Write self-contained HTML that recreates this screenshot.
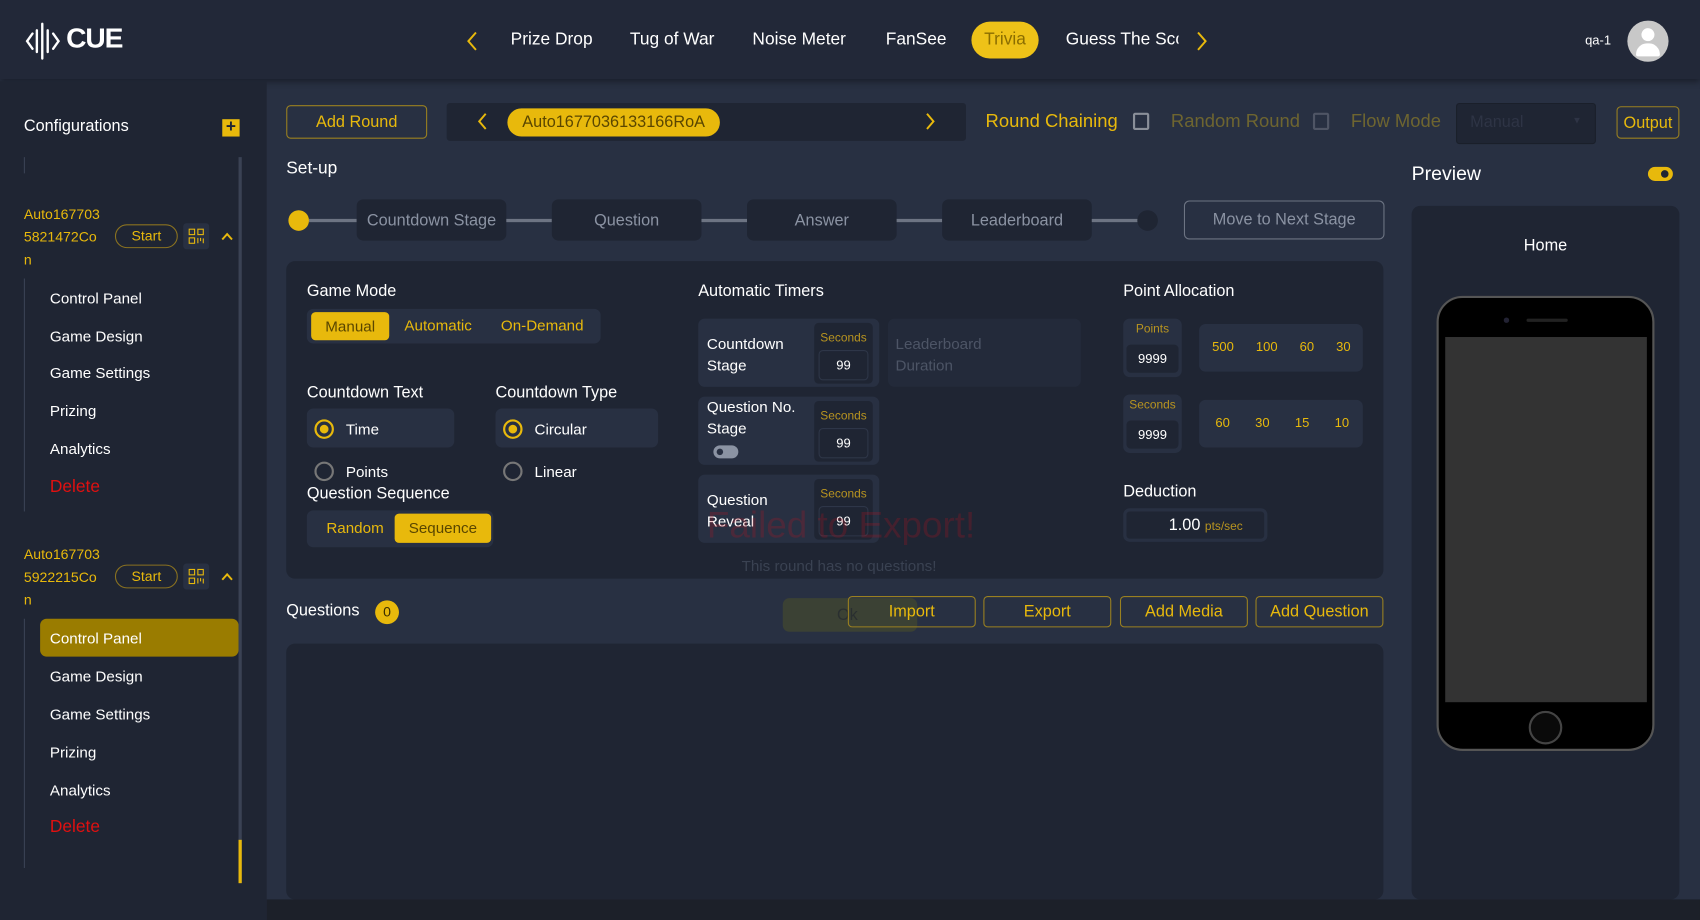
<!DOCTYPE html>
<html><head><meta charset="utf-8">
<style>
*{box-sizing:border-box;margin:0;padding:0}
html,body{width:1700px;height:920px;overflow:hidden;background:#283042}
body{font-family:"Liberation Sans",sans-serif;color:#fff}
#w{position:absolute;left:0;top:0;width:1568px;height:849px;transform:scale(1.08418,1.08363);transform-origin:0 0;background:#283042}
.a{position:absolute}
.y{color:#e8b90c}
.btn{position:absolute;border:1px solid #9a8020;border-radius:4px;color:#e8b90c;font-size:15px;display:flex;align-items:center;justify-content:center;background:#283042}
.card{position:absolute;background:#1f2533;border-radius:8px}
.side a{position:absolute;left:46px;font-size:14px;color:#fff;text-decoration:none}
.stage{position:absolute;top:184px;height:38px;width:138px;background:#1f2533;border-radius:6px;color:#8b93a3;font-size:15px;display:flex;align-items:center;justify-content:center}
.line{position:absolute;top:202px;height:3px;background:#6d7483}
.tbox{position:absolute;background:#283042;border-radius:6px}
.sec{position:absolute;background:#1f2533;border-radius:4px;width:54px;height:56px;text-align:center}
.sec .l{color:#b89420;font-size:11px;margin-top:8px}
.sec .v{margin:5px auto 0;width:46px;height:28px;background:#1f2533;border:1px solid #2e3648;border-radius:4px;font-size:12px;line-height:26px}
.radio{position:absolute;width:18px;height:18px;border-radius:50%;border:2px solid #777}
.radio.on{border-color:#e8b90c}
.radio.on:after{content:"";position:absolute;left:3px;top:3px;width:8px;height:8px;border-radius:50%;background:#e8b90c}
.lbl{position:absolute;font-size:16px;color:#fff}
</style></head><body><div id="w">
<div class="a" style="left:0;top:0;width:1568px;height:73px;background:#222838;box-shadow:0 2px 6px rgba(0,0,0,.4)"></div>
<svg class="a" style="left:22px;top:20px" width="36" height="36" viewBox="0 0 36 36" fill="none" stroke="#fff" stroke-width="2.2" stroke-linecap="round"><path d="M8 11 L3 18 L8 25"/><path d="M12 8 V28"/><path d="M17 2 V34"/><path d="M22 8 V28"/><path d="M27 11 L32 18 L27 25"/></svg>
<div class="a" style="left:61px;top:20px;font-size:26px;font-weight:bold;letter-spacing:-1px">CUE</div>
<svg class="a" style="left:429px;top:29px" width="12" height="18" fill="none" stroke="#e8b90c" stroke-width="1.8"><path d="M10 1 L3 9 L10 17"/></svg>
<div class="a" style="left:471px;top:28px;font-size:16px">Prize Drop</div>
<div class="a" style="left:581px;top:28px;font-size:16px">Tug of War</div>
<div class="a" style="left:694px;top:28px;font-size:16px">Noise Meter</div>
<div class="a" style="left:817px;top:28px;font-size:16px">FanSee</div>
<div class="a" style="left:896px;top:20px;width:62px;height:34px;border-radius:17px;background:#eec218;color:#8a6d00;font-size:16px;text-align:center;line-height:34px">Trivia</div>
<div class="a" style="left:983px;top:28px;font-size:16px;width:104px;overflow:hidden;white-space:nowrap">Guess The Sco</div>
<svg class="a" style="left:1103px;top:29px" width="12" height="18" fill="none" stroke="#e8b90c" stroke-width="1.8"><path d="M2 1 L9 9 L2 17"/></svg>
<div class="a" style="left:1462px;top:30px;font-size:12px">qa-1</div>
<div class="a" style="left:1501px;top:19px;width:38px;height:38px;border-radius:50%;background:#c8c8c8;overflow:hidden"><div class="a" style="left:13px;top:7px;width:12px;height:12px;border-radius:50%;background:#fff"></div><div class="a" style="left:8px;top:21px;width:22px;height:12px;border-radius:11px 11px 2px 2px;background:#fff"></div></div>
<div class="a side" style="left:0;top:75px;width:246px;height:774px;background:#1f2533">
<div class="a" style="left:22px;top:33px;font-size:15px">Configurations</div>
<div class="a" style="left:205px;top:35px;width:16px;height:16px;background:#e8b90c;color:#1f2533;font-weight:bold;font-size:16px;line-height:15px;text-align:center">+</div>
<div class="a" style="left:22px;top:70px;width:1px;height:15px;background:#3a4254"></div>
<div class="a" style="left:220px;top:70px;width:3px;height:670px;background:#3a4254"></div>
<div class="a" style="left:220px;top:700px;width:3px;height:40px;background:#e8b90c"></div>
<div class="a y" style="left:22px;top:112px;font-size:13px;line-height:21px">Auto167703<br>5821472Co<br>n</div>
<div class="a" style="left:106px;top:132px;width:58px;height:22px;border:1px solid #8a7220;border-radius:11px;color:#e8b90c;font-size:13px;text-align:center;line-height:20px">Start</div>
<div class="a" style="left:169px;top:131px;width:24px;height:24px;background:#283042;border-radius:3px"><svg width="24" height="24" fill="none" stroke="#e8b90c" stroke-width="1"><rect x="5.5" y="5.5" width="5" height="5"/><rect x="13.5" y="5.5" width="5" height="5"/><rect x="5.5" y="13.5" width="5" height="5"/><path d="M13.5 13.5v5M16 13.5v3M18.5 14v4.5"/></svg></div>
<svg class="a" style="left:204px;top:139px" width="11" height="8" fill="none" stroke="#e8b90c" stroke-width="1.8"><path d="M1 7 L5.5 2 L10 7"/></svg>
<div class="a" style="left:22px;top:182px;width:1px;height:215px;background:#3a4254"></div>
<a style="top:192px">Control Panel</a>
<a style="top:227px">Game Design</a>
<a style="top:261px">Game Settings</a>
<a style="top:296px">Prizing</a>
<a style="top:331px">Analytics</a>
<a style="top:366px;color:#e01010;font-size:16px">Delete</a>
<div class="a y" style="left:22px;top:426px;font-size:13px;line-height:21px">Auto167703<br>5922215Co<br>n</div>
<div class="a" style="left:106px;top:446px;width:58px;height:22px;border:1px solid #8a7220;border-radius:11px;color:#e8b90c;font-size:13px;text-align:center;line-height:20px">Start</div>
<div class="a" style="left:169px;top:445px;width:24px;height:24px;background:#283042;border-radius:3px"><svg width="24" height="24" fill="none" stroke="#e8b90c" stroke-width="1"><rect x="5.5" y="5.5" width="5" height="5"/><rect x="13.5" y="5.5" width="5" height="5"/><rect x="5.5" y="13.5" width="5" height="5"/><path d="M13.5 13.5v5M16 13.5v3M18.5 14v4.5"/></svg></div>
<svg class="a" style="left:204px;top:453px" width="11" height="8" fill="none" stroke="#e8b90c" stroke-width="1.8"><path d="M1 7 L5.5 2 L10 7"/></svg>
<div class="a" style="left:22px;top:496px;width:1px;height:230px;background:#3a4254"></div>
<div class="a" style="left:37px;top:496px;width:183px;height:35px;background:#9a7c00;border-radius:6px"></div>
<a style="top:506px">Control Panel</a>
<a style="top:541px">Game Design</a>
<a style="top:576px">Game Settings</a>
<a style="top:611px">Prizing</a>
<a style="top:646px">Analytics</a>
<a style="top:680px;color:#e01010;font-size:16px">Delete</a>
</div>
<div class="btn" style="left:264px;top:97px;width:130px;height:31px">Add Round</div>
<div class="a" style="left:412px;top:95px;width:479px;height:35px;background:#1f2533;border-radius:3px"></div>
<svg class="a" style="left:440px;top:104px" width="10" height="16" fill="none" stroke="#e8b90c" stroke-width="1.8"><path d="M8 1 L2 8 L8 15"/></svg>
<div class="a" style="left:468px;top:100px;width:196px;height:26px;border-radius:13px;background:#e8b90c;color:#5a4600;font-size:15px;text-align:center;line-height:26px">Auto1677036133166RoA</div>
<svg class="a" style="left:853px;top:104px" width="10" height="16" fill="none" stroke="#e8b90c" stroke-width="1.8"><path d="M2 1 L8 8 L2 15"/></svg>
<div class="a y" style="left:909px;top:102px;font-size:17px">Round Chaining</div>
<div class="a" style="left:1045px;top:104px;width:15px;height:16px;border:2px solid #8a8f99;border-radius:2px"></div>
<div class="a" style="left:1080px;top:102px;font-size:17px;color:#6e6530">Random Round</div>
<div class="a" style="left:1211px;top:104px;width:15px;height:16px;border:2px solid #4f5565;border-radius:2px"></div>
<div class="a" style="left:1246px;top:102px;font-size:17px;color:#6e6530">Flow Mode</div>
<div class="a" style="left:1343px;top:95px;width:129px;height:38px;background:#1f2533;border:1px solid #1a1f2a;border-radius:3px;color:#2e3445;font-size:15px;padding:8px 12px">Manual<span style="position:absolute;right:12px;top:10px;font-size:9px">▼</span></div>
<div class="btn" style="left:1491px;top:98px;width:58px;height:30px">Output</div>
<div class="a" style="left:264px;top:147px;font-size:16px">Set-up</div>
<div class="a" style="left:266px;top:194px;width:19px;height:19px;border-radius:50%;background:#e8b90c"></div>
<div class="line" style="left:285px;width:44px"></div>
<div class="stage" style="left:329px">Countdown Stage</div>
<div class="line" style="left:467px;width:42px"></div>
<div class="stage" style="left:509px">Question</div>
<div class="line" style="left:647px;width:42px"></div>
<div class="stage" style="left:689px">Answer</div>
<div class="line" style="left:827px;width:42px"></div>
<div class="stage" style="left:869px">Leaderboard</div>
<div class="line" style="left:1007px;width:45px"></div>
<div class="a" style="left:1049px;top:194px;width:19px;height:19px;border-radius:50%;background:#1f2533"></div>
<div class="a" style="left:1092px;top:185px;width:185px;height:36px;border:1px solid #6d7483;border-radius:5px;color:#8b93a3;font-size:15px;text-align:center;line-height:34px">Move to Next Stage</div>
<div class="card" style="left:264px;top:241px;width:1012px;height:293px"></div>
<div class="lbl" style="left:283px;top:260px;font-size:15px">Game Mode</div>
<div class="tbox" style="left:283px;top:285px;width:271px;height:32px"></div>
<div class="a" style="left:287px;top:288px;width:72px;height:26px;background:#e8b90c;border-radius:4px;color:#5a4600;font-size:14px;text-align:center;line-height:26px">Manual</div>
<div class="a y" style="left:373px;top:292px;font-size:14px">Automatic</div>
<div class="a y" style="left:462px;top:292px;font-size:14px">On-Demand</div>
<div class="lbl" style="left:283px;top:354px;font-size:15px">Countdown Text</div>
<div class="lbl" style="left:457px;top:354px;font-size:15px">Countdown Type</div>
<div class="tbox" style="left:283px;top:377px;width:136px;height:36px"></div>
<div class="tbox" style="left:457px;top:377px;width:150px;height:36px"></div>
<div class="radio on" style="left:290px;top:387px"></div><div class="lbl" style="left:319px;top:388px;font-size:14px">Time</div>
<div class="radio on" style="left:464px;top:387px"></div><div class="lbl" style="left:493px;top:388px;font-size:14px">Circular</div>
<div class="radio" style="left:290px;top:426px"></div><div class="lbl" style="left:319px;top:427px;font-size:14px">Points</div>
<div class="radio" style="left:464px;top:426px"></div><div class="lbl" style="left:493px;top:427px;font-size:14px">Linear</div>
<div class="lbl" style="left:283px;top:447px;font-size:15px">Question Sequence</div>
<div class="tbox" style="left:283px;top:471px;width:172px;height:34px"></div>
<div class="a y" style="left:301px;top:479px;font-size:14px">Random</div>
<div class="a" style="left:364px;top:474px;width:89px;height:27px;background:#e8b90c;border-radius:4px;color:#5a4600;font-size:14px;text-align:center;line-height:27px">Sequence</div>
<div class="lbl" style="left:644px;top:260px;font-size:15px">Automatic Timers</div>
<div class="tbox" style="left:644px;top:294px;width:167px;height:63px"></div>
<div class="lbl" style="left:652px;top:307px;font-size:14px;line-height:20px">Countdown<br>Stage</div>
<div class="sec" style="left:751px;top:298px"><div class="l">Seconds</div><div class="v">99</div></div>
<div class="tbox" style="left:819px;top:294px;width:178px;height:63px;opacity:.45"></div>
<div class="lbl" style="left:826px;top:307px;font-size:14px;line-height:20px;color:#4d5566">Leaderboard<br>Duration</div>
<div class="tbox" style="left:644px;top:366px;width:167px;height:63px"></div>
<div class="lbl" style="left:652px;top:365px;font-size:14px;line-height:20px">Question No.<br>Stage</div>
<div class="a" style="left:658px;top:411px;width:23px;height:12px;border-radius:6px;background:#8b93a3"><div class="a" style="left:3px;top:3px;width:6px;height:6px;border-radius:50%;background:#283042"></div></div>
<div class="sec" style="left:751px;top:370px"><div class="l">Seconds</div><div class="v">99</div></div>
<div class="tbox" style="left:644px;top:438px;width:167px;height:63px"></div>
<div class="lbl" style="left:652px;top:451px;font-size:14px;line-height:20px">Question<br>Reveal</div>
<div class="sec" style="left:751px;top:442px"><div class="l">Seconds</div><div class="v">99</div></div>
<div class="a" style="left:652px;top:466px;font-size:34px;color:rgba(200,20,30,.22)">Failed to Export!</div>
<div class="a" style="left:684px;top:514px;font-size:14px;color:#3a4252">This round has no questions!</div>
<div class="lbl" style="left:1036px;top:260px;font-size:15px">Point Allocation</div>
<div class="tbox" style="left:1036px;top:294px;width:54px;height:54px"></div>
<div class="a" style="left:1036px;top:298px;width:54px;text-align:center;color:#b89420;font-size:11px">Points</div>
<div class="a" style="left:1039px;top:318px;width:48px;height:26px;background:#1f2533;border-radius:4px;font-size:12px;text-align:center;line-height:26px">9999</div>
<div class="tbox" style="left:1106px;top:299px;width:151px;height:44px"></div>
<div class="a y" style="left:1118px;top:313px;font-size:12px;word-spacing:17px">500 100 60 30</div>
<div class="tbox" style="left:1036px;top:364px;width:54px;height:54px"></div>
<div class="a" style="left:1036px;top:368px;width:54px;text-align:center;color:#b89420;font-size:11px">Seconds</div>
<div class="a" style="left:1039px;top:388px;width:48px;height:26px;background:#1f2533;border-radius:4px;font-size:12px;text-align:center;line-height:26px">9999</div>
<div class="tbox" style="left:1106px;top:369px;width:151px;height:44px"></div>
<div class="a y" style="left:1121px;top:383px;font-size:12px;word-spacing:20px">60 30 15 10</div>
<div class="lbl" style="left:1036px;top:445px;font-size:15px">Deduction</div>
<div class="tbox" style="left:1036px;top:469px;width:133px;height:31px"></div>
<div class="a" style="left:1039px;top:472px;width:127px;height:25px;background:#1f2533;border-radius:3px"></div>
<div class="a" style="left:1078px;top:476px;font-size:15px">1.00 <span style="color:#b89420;font-size:11px">pts/sec</span></div>
<div class="lbl" style="left:264px;top:555px;font-size:15px">Questions</div>
<div class="a" style="left:346px;top:554px;width:22px;height:22px;border-radius:50%;background:#e8b90c;color:#3a2e00;font-size:13px;text-align:center;line-height:22px">0</div>
<div class="a" style="left:722px;top:552px;width:124px;height:31px;background:#3b4134;border-radius:6px;color:#2a2f30;font-size:15px;line-height:31px;padding-left:50px">Ok</div>
<div class="btn" style="left:782px;top:550px;width:118px;height:29px;background:transparent">Import</div>
<div class="btn" style="left:907px;top:550px;width:118px;height:29px">Export</div>
<div class="btn" style="left:1033px;top:550px;width:118px;height:29px">Add Media</div>
<div class="btn" style="left:1158px;top:550px;width:118px;height:29px">Add Question</div>
<div class="card" style="left:264px;top:594px;width:1012px;height:236px"></div>
<div class="lbl" style="left:1302px;top:150px;font-size:18px">Preview</div>
<div class="a" style="left:1520px;top:154px;width:23px;height:13px;border-radius:7px;background:#e8b90c"><div class="a" style="left:12px;top:3px;width:7px;height:7px;border-radius:50%;background:#1f2533"></div></div>
<div class="card" style="left:1302px;top:190px;width:247px;height:640px"></div>
<div class="lbl" style="left:1302px;top:218px;width:247px;text-align:center;font-size:15px">Home</div>
<div class="a" style="left:1325px;top:273px;width:201px;height:420px;background:#000;border-radius:24px;border:2px solid #555"></div>
<div class="a" style="left:1333px;top:311px;width:186px;height:337px;background:#333"></div>
<div class="a" style="left:1408px;top:294px;width:38px;height:3px;border-radius:2px;background:#222"></div>
<div class="a" style="left:1387px;top:293px;width:5px;height:5px;border-radius:50%;background:#223"></div>
<div class="a" style="left:1410px;top:656px;width:31px;height:31px;border-radius:50%;border:2px solid #444;background:#0a0a0a"></div>
<div class="a" style="left:246px;top:830px;width:1322px;height:19px;background:#1c2029"></div>
</div></body></html>
